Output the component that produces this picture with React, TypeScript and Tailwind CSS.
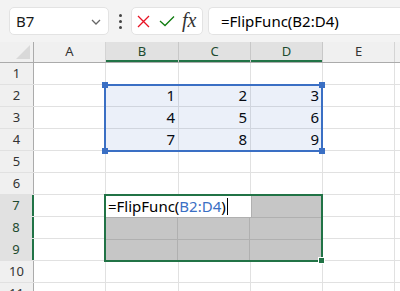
import React from "react";

const COLS = [
  { key: "A", w: 72 },
  { key: "B", w: 73 },
  { key: "C", w: 72 },
  { key: "D", w: 72 },
  { key: "E", w: 72 },
  { key: "F", w: 72 },
];

const DATA: Record<number, (string | null)[]> = {
  2: [null, "1", "2", "3", null, null],
  3: [null, "4", "5", "6", null, null],
  4: [null, "7", "8", "9", null, null],
};

const font = { fontFamily: '"Noto Sans", "Open Sans", sans-serif' };

function Cell({ w, children, className = "" }: { w: number; children?: React.ReactNode; className?: string }) {
  return (
    <div
      className={`h-full shrink-0 border-r border-[#e1e1e1] flex items-center justify-end pr-[3px] text-[15px] text-black ${className}`}
      style={{ width: w }}
    >
      {children}
    </div>
  );
}

export default function App() {
  const rows = Array.from({ length: 11 }, (_, i) => i + 1);
  return (
    <div className="w-[400px] h-[291px] overflow-hidden bg-white relative select-none" style={font}>
      {/* toolbar */}
      <div className="h-[42px] bg-[#f3f3f3] flex items-start pt-[7px] pl-[9px]">
        <div className="w-[100px] h-[28px] bg-white rounded-[5px] border border-[#e3e3e3] flex items-center pl-[6px] pr-[7px] justify-between">
          <span className="text-[15px] text-[#1a1a1a]">B7</span>
          <svg width="10" height="6" viewBox="0 0 10 6" className="mt-[1px]">
            <path d="M1 1 L5 5 L9 1" fill="none" stroke="#666" strokeWidth="1.3" />
          </svg>
        </div>
        <div className="w-[22px] h-[28px] flex flex-col items-center justify-center gap-[3px]">
          <div className="w-[3px] h-[3px] bg-[#444] rounded-full" />
          <div className="w-[3px] h-[3px] bg-[#444] rounded-full" />
          <div className="w-[3px] h-[3px] bg-[#444] rounded-full" />
        </div>
        <div className="w-[72px] h-[28px] bg-white rounded-[5px] border border-[#e3e3e3] flex items-center pl-[5px] gap-[9px]">
          <svg width="13" height="13" viewBox="0 0 13 13">
            <path d="M1 1 L12 12 M12 1 L1 12" stroke="#e81123" strokeWidth="1.3" />
          </svg>
          <svg width="16" height="12" viewBox="0 0 16 12">
            <path d="M1 6 L6 10.5 L15 1.5" fill="none" stroke="#107c10" strokeWidth="1.3" />
          </svg>
          <span className="italic text-[20px] text-[#333] leading-none -ml-[2px] mb-[2px]" style={{ fontFamily: '"Liberation Serif", serif' }}>
            fx
          </span>
        </div>
        <div className="ml-[5px] flex-1 h-[28px] bg-white rounded-l-[5px] border border-r-0 border-[#e3e3e3] flex items-center pl-[12px]">
          <span className="text-[15px] text-black">=FlipFunc(B2:D4)</span>
        </div>
      </div>

      {/* column header */}
      <div className="h-[21px] flex bg-[#f0f0f0] border-b border-[#ababab]">
        <div className="w-[34px] shrink-0 h-full border-r border-[#ababab] relative">
          <svg width="14" height="14" viewBox="0 0 14 14" className="absolute right-[3px] bottom-[3px]">
            <path d="M14 0 L14 14 L0 14 Z" fill="#d9d9d9" />
          </svg>
        </div>
        {COLS.map((c) => {
          const sel = c.key === "B" || c.key === "C" || c.key === "D";
          return (
            <div
              key={c.key}
              className={`shrink-0 h-full flex items-center justify-center text-[13px] border-r ${
                sel ? "bg-[#e1e1e1] text-[#1d4a2f] border-[#c8c8c8] shadow-[inset_0_-2px_0_#217346]" : "text-[#333] border-[#d4d4d4]"
              }`}
              style={{ width: c.w }}
            >
              {c.key}
            </div>
          );
        })}
      </div>

      {/* rows */}
      {rows.map((r) => {
        const sel = r >= 7 && r <= 9;
        return (
          <div key={r} className="h-[22px] flex border-b border-[#e1e1e1]">
            <div
              className={`w-[34px] shrink-0 h-full flex items-center justify-center text-[13px] border-r ${
                sel ? "bg-[#e1e1e1] text-[#1d4a2f] border-[#217346] border-r-2" : "bg-[#f0f0f0] text-[#333] border-[#ababab]"
              }`}
            >
              {r}
            </div>
            {COLS.map((c, i) => (
              <Cell key={c.key} w={c.w}>
                {DATA[r]?.[i] ?? null}
              </Cell>
            ))}
          </div>
        );
      })}

      {/* blue range B2:D4 */}
      <div className="absolute left-[104px] top-[84px] w-[219px] h-[68px] border-2 border-[#3a6fc4] bg-[#3a6fc4]/10" />
      <div className="absolute left-[102px] top-[82px] w-[6px] h-[6px] bg-[#3a6fc4]" />
      <div className="absolute left-[319px] top-[82px] w-[6px] h-[6px] bg-[#3a6fc4]" />
      <div className="absolute left-[102px] top-[148px] w-[6px] h-[6px] bg-[#3a6fc4]" />
      <div className="absolute left-[319px] top-[148px] w-[6px] h-[6px] bg-[#3a6fc4]" />

      {/* green selection B7:D9 */}
      <div className="absolute left-[104px] top-[194px] w-[219px] h-[68px] border-2 border-[#217346] bg-[#c6c6c6] overflow-hidden">
        <div className="flex flex-col h-full">
          <div className="h-[22px] flex border-b border-[#b0b0b0]">
            <div className="w-[145px] h-full bg-white flex items-center pl-[2px] pb-[1px]">
              <span className="text-[15px] text-black leading-none">
                =FlipFunc(<span className="text-[#3a6fc4]">B2:D4</span>)
              </span>
              <div className="w-px h-[17px] bg-black ml-[1px]" />
            </div>
            <div className="flex-1 border-l border-[#b0b0b0]" />
          </div>
          <div className="h-[22px] flex border-b border-[#b0b0b0]">
            <div className="w-[72px] border-r border-[#b0b0b0]" />
            <div className="w-[72px] border-r border-[#b0b0b0]" />
            <div className="flex-1" />
          </div>
          <div className="flex-1 flex">
            <div className="w-[72px] border-r border-[#b0b0b0]" />
            <div className="w-[72px] border-r border-[#b0b0b0]" />
            <div className="flex-1" />
          </div>
        </div>
      </div>
      <div className="absolute left-[318px] top-[257px] w-[7px] h-[7px] bg-[#217346] border border-white" />
    </div>
  );
}
